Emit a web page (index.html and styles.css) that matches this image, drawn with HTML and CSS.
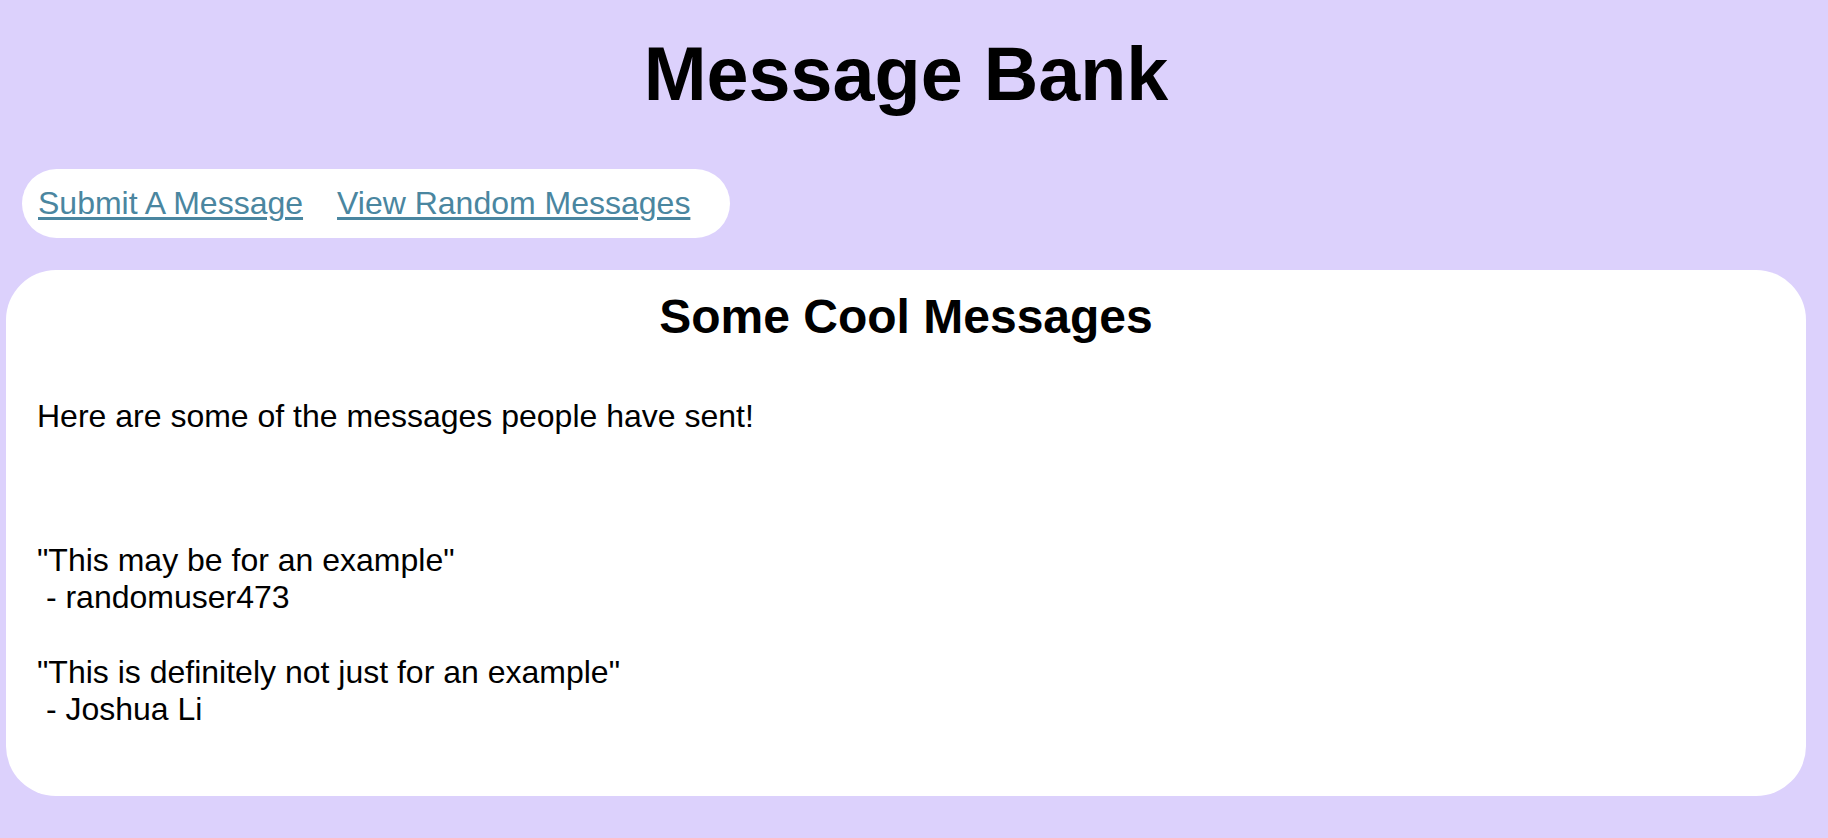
FILE: index.html
```html
<!DOCTYPE html>
<html lang="en">
<head>
<meta charset="utf-8">
<title>Message Bank</title>
<link rel="stylesheet" href="styles.css">
</head>
<body>
<h1 class="title">Message Bank</h1>
<nav class="nav">
  <a class="nav-link" href="#">Submit A Message</a>
  <a class="nav-link" href="#">View Random Messages</a>
</nav>
<main class="card">
  <h2 class="card-title">Some Cool Messages</h2>
  <p class="intro">Here are some of the messages people have sent!</p>
  <div class="messages">
    <p class="msg">"This may be for an example"<br>&nbsp;- randomuser473</p>
    <p class="msg">"This is definitely not just for an example"<br>&nbsp;- Joshua Li</p>
  </div>
</main>
</body>
</html>
```

FILE: styles.css
```css
html {
  background: #dcd1fc;
}

body {
  margin: 0;
  padding-right: 16px;
  background: #dcd1fc;
  font-family: "Liberation Sans", Helvetica, Arial, sans-serif;
  font-size: 32px;
  line-height: 1.15;
  color: #000;
}

.title {
  margin: 32px 0 0;
  text-align: center;
  font-size: 75.5px;
  font-weight: bold;
  line-height: 85px;
}

.nav {
  display: inline-flex;
  gap: 34px;
  margin: 52px 0 0 22px;
  padding: 16px 40px 16px 16px;
  background: #fff;
  border-radius: 35px;
}

.nav-link {
  color: #4a86a0;
  text-decoration: underline;
  text-underline-offset: 3px;
}

.card {
  margin: 32px 6px 0 6px;
  padding: 19px 30px 67px;
  background: #fff;
  border-radius: 50px;
}

.card-title {
  margin: 0;
  text-align: center;
  font-size: 48px;
  font-weight: bold;
  line-height: 55px;
}

.intro {
  margin: 54px 0 0 1px;
  line-height: 37.3px;
}

.messages {
  margin-top: 107px;
  margin-left: 1px;
}

.msg {
  margin: 0 0 37.3px;
  line-height: 37.3px;
}

.msg:last-child {
  margin-bottom: 0;
}
```
